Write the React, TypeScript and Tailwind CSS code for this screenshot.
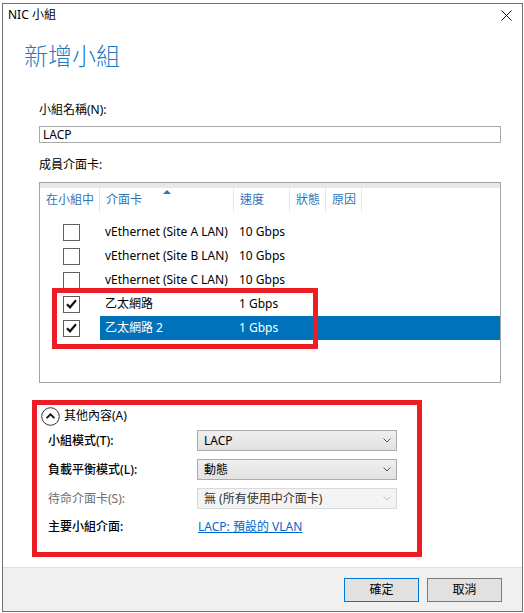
import React from "react";

const FONT = { fontFamily: '"Noto Sans", "Noto Sans CJK TC", sans-serif' };

const rows = [
  { name: "vEthernet (Site A LAN)", speed: "10 Gbps", checked: false, selected: false },
  { name: "vEthernet (Site B LAN)", speed: "10 Gbps", checked: false, selected: false },
  { name: "vEthernet (Site C LAN)", speed: "10 Gbps", checked: false, selected: false },
  { name: "乙太網路", speed: "1 Gbps", checked: true, selected: false },
  { name: "乙太網路 2", speed: "1 Gbps", checked: true, selected: true },
];

const Check = () => (
  <svg width="11" height="10" viewBox="0 0 11 10">
    <path d="M1 5.2 L4 8.3 L10 1.2" fill="none" stroke="#111" strokeWidth="2.2" />
  </svg>
);

const Chevron = ({ color = "#444" }: { color?: string }) => (
  <svg width="8" height="5" viewBox="0 0 8 5">
    <path d="M0.5 0.5 L4 4 L7.5 0.5" fill="none" stroke={color} strokeWidth="1" />
  </svg>
);

const Select = ({ value, disabled }: { value: string; disabled?: boolean }) => (
  <div
    className={
      "w-[200px] h-[21px] flex items-center justify-between pl-[6px] pr-[5px] border " +
      (disabled
        ? "bg-[#f4f4f4] border-[#d9d9d9] text-[#333]"
        : "bg-gradient-to-b from-[#efefef] to-[#e2e2e2] border-[#acacac]")
    }
  >
    <span>{value}</span>
    <Chevron color={disabled ? "#bcbcbc" : "#555"} />
  </div>
);

export default function App() {
  return (
    <div className="w-[524px] h-[613px] bg-white pl-[2px] pt-[3px] text-[12px] text-black" style={FONT}>
      <div className="relative w-[521px] h-[609px] border border-[#707070] bg-white flex flex-col">
        {/* title bar */}
        <div className="h-[22px] flex items-center justify-between pl-[5px] pr-[10px]">
          <span>NIC 小組</span>
          <svg width="11" height="11" viewBox="0 0 11 11">
            <path d="M0.5 0.5 L10.5 10.5 M10.5 0.5 L0.5 10.5" stroke="#111" strokeWidth="1" />
          </svg>
        </div>

        <div className="mt-[14px] pl-[21px] h-[32px] leading-[32px] text-[24px] font-light text-[#1f7bbf]">
          新增小組
        </div>

        <div className="pl-[36px] pr-[19px]">
          <div className="mt-[30px] h-[16px] leading-[16px]">小組名稱(N):</div>
          <div className="mt-[8px] w-[462px] h-[17px] border border-[#a9a9a9] flex items-center pl-[3px]">LACP</div>

          <div className="mt-[14px] h-[16px] leading-[16px]">成員介面卡:</div>

          {/* member list */}
          <div className="mt-[9px] w-[462px] h-[201px] border border-[#a3a3a3] bg-white">
            <div className="h-[5px] bg-[#e8e8e8]" />
            <div className="relative h-[24px] flex text-[#2f73b8]">
              <div className="w-[60px] pl-[6px] pt-[3px] border-r border-[#e6e6e6]">在小組中</div>
              <div className="w-[134px] pl-[6px] pt-[3px] border-r border-[#e6e6e6]">介面卡</div>
              <div className="w-[56px] pl-[6px] pt-[3px] border-r border-[#e6e6e6]">速度</div>
              <div className="w-[36px] pl-[6px] pt-[3px] border-r border-[#e6e6e6]">狀態</div>
              <div className="w-[36px] pl-[6px] pt-[3px] border-r border-[#e6e6e6]">原因</div>
              <svg className="absolute left-[123px] top-[2px]" width="8" height="4" viewBox="0 0 8 4">
                <path d="M0 4 L4 0 L8 4 Z" fill="#2f73b8" />
              </svg>
            </div>
            <div className="mt-[8px]">
              {rows.map((r) => (
                <div key={r.name} className="h-[24px] flex">
                  <div className="w-[60px] flex items-center pl-[23px]">
                    <div className="w-[17px] h-[17px] border border-[#5f5f5f] bg-white flex items-center justify-center">
                      {r.checked && <Check />}
                    </div>
                  </div>
                  <div
                    className={"flex-1 flex items-center " + (r.selected ? "bg-[#0072bc] text-white" : "")}
                  >
                    <div className="w-[134px] pl-[5px] whitespace-nowrap">{r.name}</div>
                    <div className="pl-[5px] whitespace-nowrap">{r.speed}</div>
                  </div>
                </div>
              ))}
            </div>
          </div>
        </div>

        {/* annotation over the checked rows */}
        <div className="absolute left-[49px] top-[284px] w-[266px] h-[61px] border-[5px] border-[#ee1c25]" />

        {/* additional properties, boxed in red */}
        <div className="mt-[17px] ml-[29px] w-[390px] h-[157px] border-[5px] border-[#ee1c25] pl-[4px]">
          <div className="mt-[1px] h-[20px] flex items-center gap-[4px]">
            <svg width="19" height="19" viewBox="0 0 19 19">
              <circle cx="9.5" cy="9.5" r="8.8" fill="white" stroke="#333" strokeWidth="1" />
              <path d="M5.6 11.2 L9.5 7.3 L13.4 11.2" fill="none" stroke="#111" strokeWidth="1.8" />
            </svg>
            <span>其他內容(A)</span>
          </div>
          <div className="pl-[7px] mt-[4px] flex flex-col gap-[8px]">
            <div className="flex items-center">
              <div className="w-[149px] font-medium">小組模式(T):</div>
              <Select value="LACP" />
            </div>
            <div className="flex items-center">
              <div className="w-[149px] font-medium">負載平衡模式(L):</div>
              <Select value="動態" />
            </div>
            <div className="flex items-center">
              <div className="w-[149px] text-[#6d6d6d]">待命介面卡(S):</div>
              <Select value="無 (所有使用中介面卡)" disabled />
            </div>
          </div>
          <div className="pl-[7px] mt-[10px] h-[16px] flex items-center">
            <div className="w-[150px] font-medium">主要小組介面:</div>
            <span className="text-[#0066cc] underline">LACP: 預設的 VLAN</span>
          </div>
        </div>

        <div className="flex-1" />

        {/* footer */}
        <div className="h-[44px] border-t border-[#dfdfdf] bg-[#f0f0f0] flex items-start justify-end gap-[8px] pt-[10px] pr-[20px]">
          <button className="w-[75px] h-[24px] border border-[#0078d7] bg-[#e1e1e1]">確定</button>
          <button className="w-[75px] h-[24px] border border-[#7a7a7a] bg-[#e1e1e1]">取消</button>
        </div>
      </div>
    </div>
  );
}
